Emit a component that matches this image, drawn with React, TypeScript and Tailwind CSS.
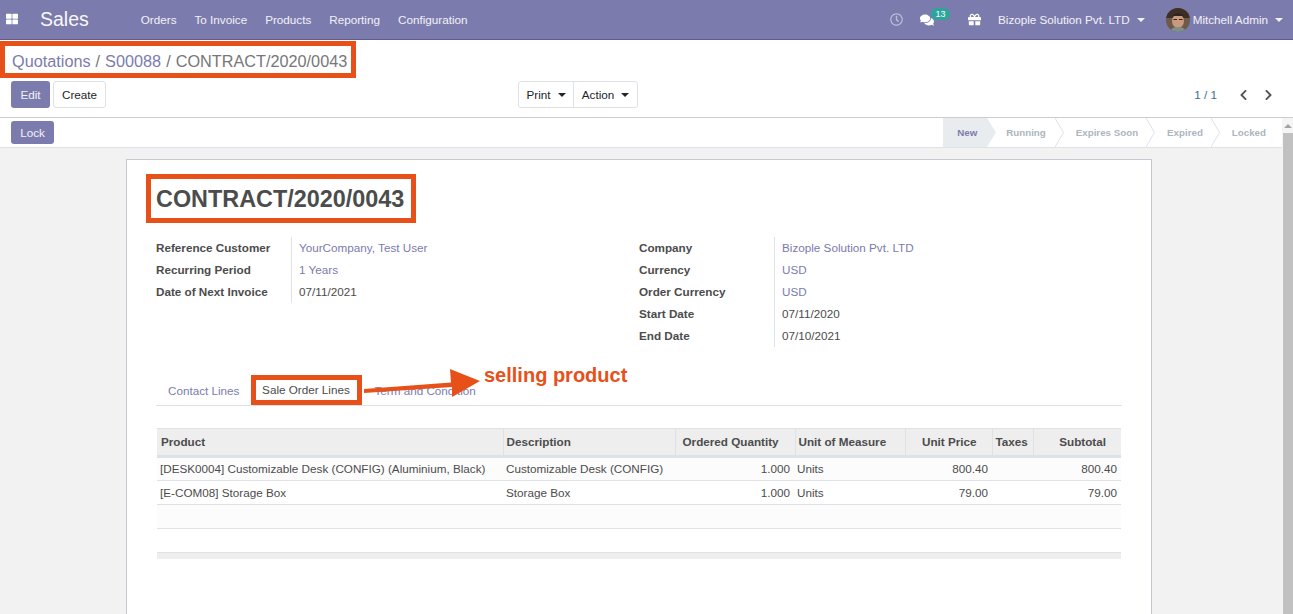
import React from "react";
import { FaThLarge, FaRegClock, FaComments, FaGift, FaChevronLeft, FaChevronRight } from "react-icons/fa";

const Caret = () => (
  <span className="inline-block w-0 h-0 border-x-[4px] border-x-transparent border-t-[4px] border-t-current align-middle" />
);

const Chevron = () => (
  <svg width="9" height="29" viewBox="0 0 9 29" className="shrink-0">
    <path d="M0 0 L8.5 14.5 L0 29" fill="none" stroke="#dee2e6" strokeWidth="1" />
  </svg>
);

const Field = ({ label, value, link }: { label: string; value: string; link?: boolean }) => (
  <div className="flex h-[22px] items-center">
    <div className="w-[135px] font-bold text-[#4c4c4c] pr-2 whitespace-nowrap">{label}</div>
    <div className={`pl-[7px] border-l border-[#dee2e6] h-full flex items-center whitespace-nowrap ${link ? "text-[#7c7bad]" : "text-[#4c4c4c]"}`}>{value}</div>
  </div>
);

const cols = [346, 172, 120, 110, 87, 41, 88];

const Row = ({ cells, shade }: { cells: string[]; shade?: boolean }) => (
  <tr className={`h-6 border-b border-[#dee2e6] ${shade ? "bg-[#fcfcfc]" : "bg-white"}`}>
    <td className="px-[3px] whitespace-nowrap">{cells[0]}</td>
    <td className="px-[3px] whitespace-nowrap">{cells[1]}</td>
    <td className="pl-[3px] pr-[5px] text-right">{cells[2]}</td>
    <td className="pl-[2px] pr-[3px]">{cells[3]}</td>
    <td className="pl-[3px] pr-[4px] text-right">{cells[4]}</td>
    <td className="px-[3px]"></td>
    <td className="pl-[3px] pr-[4px] text-right">{cells[5]}</td>
  </tr>
);

export default function App() {
  return (
    <div className="h-[614px] w-[1293px] overflow-hidden flex flex-col bg-white text-[11.7px] leading-[18px] text-[#4c4c4c] font-['Liberation_Sans',Arial,sans-serif]">
      {/* navbar */}
      <div className="h-10 shrink-0 bg-[#7c7bad] border-b border-[#5f5e8b] flex items-center text-white">
        <FaThLarge className="ml-[6px] mt-[-2px] w-3 h-3" />
        <div className="ml-[22px] text-[19.5px] opacity-95 mt-[-2px]">Sales</div>
        <div className="ml-[52px] flex gap-[18px] text-white/90">
          <span>Orders</span><span>To Invoice</span><span>Products</span><span>Reporting</span><span>Configuration</span>
        </div>
        <div className="ml-auto flex items-center">
          <FaRegClock className="w-[13px] h-[13px] text-white/50" />
          <div className="relative ml-[17px] w-[14px]">
            <FaComments className="w-[14px] h-[14px]" />
            <span className="absolute left-[11px] top-[-5px] h-3 w-[19px] rounded-full bg-[#2da59a] text-[9px] leading-3 text-center">13</span>
          </div>
          <FaGift className="ml-[34px] w-[13px] h-[13px]" />
          <span className="ml-[17px] text-white/90 whitespace-nowrap">Bizople Solution Pvt. LTD</span>
          <span className="ml-[7px] flex text-white/90"><Caret /></span>
          <svg width="24" height="24" viewBox="0 0 24 24" className="ml-[21px] rounded-full shrink-0">
            <rect width="24" height="24" fill="#6d5a48" />
            <path d="M0 0h24v10H0z" fill="#3d2e26" />
            <ellipse cx="12" cy="13" rx="6" ry="7" fill="#c99a7c" />
            <path d="M6 9c1-5 11-5 12 0l-2-1H8z" fill="#2e2420" />
            <path d="M7.5 11.5h3.5M13 11.5h3.5" stroke="#2e2420" strokeWidth="1.2" />
            <path d="M4 24c1-4 4-5 8-5s7 1 8 5z" fill="#7f8f8c" />
          </svg>
          <span className="ml-[3px] text-white/90 whitespace-nowrap">Mitchell Admin</span>
          <span className="ml-[7px] mr-[10px] flex text-white/90"><Caret /></span>
        </div>
      </div>

      {/* control panel */}
      <div className="h-[78px] shrink-0 border-b border-[#cccccc] flex flex-col">
        <div className="h-[41px] flex items-start">
          <div className="mt-[1px] h-[37px] w-[356px] pl-[7px] pt-[2px] border-[5px] border-[#e8501a] flex items-center text-[16.25px] whitespace-nowrap gap-[5px]">
            <span className="text-[#7c7bad]">Quotations</span><span className="text-[#777]">/</span>
            <span className="text-[#7c7bad]">S00088</span><span className="text-[#777]">/</span>
            <span className="text-[#777]">CONTRACT/2020/0043</span>
          </div>
        </div>
        <div className="flex items-center h-[27px] pl-[11px] pr-[19px] relative">
          <div className="h-[27px] w-[39px] rounded-[3px] bg-[#7c7bad] text-white/90 flex items-center justify-center">Edit</div>
          <div className="ml-[3px] h-[27px] w-[53px] rounded-[3px] bg-white border border-[#dee2e6] text-[#212529] flex items-center justify-center">Create</div>
          <div className="ml-[412px] h-[27px] w-[120px] flex rounded-[3px] border border-[#dee2e6] text-[#212529]">
            <div className="w-[55px] border-r border-[#dee2e6] flex items-center justify-center gap-[7px]">Print <Caret /></div>
            <div className="flex-1 flex items-center justify-center gap-[7px]">Action <Caret /></div>
          </div>
          <div className="ml-auto flex items-center text-[#4c4c4c]">
            <span className="text-[#3f6f87]">1 / 1</span>
            <FaChevronLeft className="ml-[21px] w-[11px] h-[12px] text-[#555]" />
            <FaChevronRight className="ml-[14px] w-[11px] h-[12px] text-[#555]" />
          </div>
        </div>
      </div>

      {/* scrolling body */}
      <div className="flex-1 min-h-0 flex">
        <div className="flex-1 min-w-0 flex flex-col">
          {/* status bar */}
          <div className="h-[30px] shrink-0 border-b border-[#dee2e6] flex items-center bg-white">
            <div className="ml-[11px] h-[23px] w-[43px] rounded-[3px] bg-[#7c7bad] text-white/90 flex items-center justify-center">Lock</div>
            <div className="ml-auto h-[29px] flex items-center text-[9.75px] font-bold text-[#adb5bd] whitespace-nowrap">
              <div className="h-full flex items-center bg-[#e9ecef] text-[#7c7bad] pl-[14px] pr-[10px]">New</div>
              <svg width="9" height="29" viewBox="0 0 9 29" className="shrink-0"><path d="M0 0 L9 14.5 L0 29z" fill="#e9ecef" /></svg>
              <span className="ml-[10px] mr-[9px]">Running</span><Chevron />
              <span className="ml-[12px] mr-[8px]">Expires Soon</span><Chevron />
              <span className="ml-[12px] mr-[8px]">Expired</span><Chevron />
              <span className="ml-[12px] mr-[16px]">Locked</span>
            </div>
          </div>
          {/* form background */}
          <div className="flex-1 min-h-0 bg-[#f2f2f2] pt-[11px] pl-[126px] overflow-hidden">
            <div className="w-[1026px] h-[600px] bg-white border border-[#c8c8d0] pl-[29px] pr-[29px] pt-[14px] relative">
              <div className="inline-block h-[49px] ml-[-10px] pl-[5px] pr-[7px] border-[5px] border-[#e8501a] text-[23.4px] leading-[41px] font-bold text-[#4c4c4c] whitespace-nowrap">CONTRACT/2020/0043</div>
              <div className="mt-[14px] flex">
                <div className="w-[483px] h-[110px]">
                  <Field label="Reference Customer" value="YourCompany, Test User" link />
                  <Field label="Recurring Period" value="1 Years" link />
                  <Field label="Date of Next Invoice" value="07/11/2021" />
                </div>
                <div>
                  <Field label="Company" value="Bizople Solution Pvt. LTD" link />
                  <Field label="Currency" value="USD" link />
                  <Field label="Order Currency" value="USD" link />
                  <Field label="Start Date" value="07/11/2020" />
                  <Field label="End Date" value="07/10/2021" />
                </div>
              </div>

              {/* tabs */}
              <div className="mt-[29px] h-[30px] border-b border-[#dee2e6] flex items-end w-[966px]">
                <span className="ml-[12px] mb-[5px] text-[#7c7bad]">Contact Lines</span>
                <div className="ml-[12px] h-[30px] w-[111px] border-[5px] border-[#e8501a] pr-[2px] flex items-center justify-center text-[#4c4c4c] whitespace-nowrap">Sale Order Lines</div>
                <span className="ml-[12px] mb-[5px] text-[#7c7bad]">Term and Condition</span>
              </div>

              {/* annotation */}
              <svg width="125" height="34" viewBox="0 0 125 34" className="absolute left-[236px] top-[208px]">
                <path d="M1 21 L88 14.5 L87 1 L117 13 L89 29 L89 19 L1 25z" fill="#e8501a" />
              </svg>
              <div className="absolute left-[357px] top-[203px] text-[20px] leading-6 font-bold text-[#e8501a] whitespace-nowrap">selling product</div>

              {/* table */}
              <table className="mt-[22px] ml-[1px] table-fixed border-collapse w-[964px] text-[#4c4c4c]">
                <colgroup>
                  {cols.map((w, i) => <col key={i} style={{ width: w }} />)}
                </colgroup>
                <thead>
                  <tr className="h-[28px] bg-[#eeeeee] border-t border-[#dee2e6] border-b-[3px] font-bold">
                    <th className="px-1 text-left border-r border-[#dee2e6]">Product</th>
                    <th className="px-[3px] text-left border-r border-[#dee2e6]">Description</th>
                    <th className="px-[7px] text-left border-r border-[#dee2e6] whitespace-nowrap">Ordered Quantity</th>
                    <th className="px-[3px] text-left border-r border-[#dee2e6] whitespace-nowrap">Unit of Measure</th>
                    <th className="pr-[15px] text-right border-r border-[#dee2e6] whitespace-nowrap">Unit Price</th>
                    <th className="px-[3px] text-left border-r border-[#dee2e6]">Taxes</th>
                    <th className="pr-[15px] text-right">Subtotal</th>
                  </tr>
                </thead>
                <tbody>
                  <Row shade cells={["[DESK0004] Customizable Desk (CONFIG) (Aluminium, Black)", "Customizable Desk (CONFIG)", "1.000", "Units", "800.40", "800.40"]} />
                  <Row cells={["[E-COM08] Storage Box", "Storage Box", "1.000", "Units", "79.00", "79.00"]} />
                  <Row shade cells={["", "", "", "", "", ""]} />
                  <Row cells={["", "", "", "", "", ""]} />
                  <tr className="h-[6px] bg-[#eeeeee]"><td colSpan={7}></td></tr>
                </tbody>
              </table>
            </div>
          </div>
        </div>
        {/* scrollbar */}
        <div className="w-[11px] shrink-0 bg-[#f5f5f5] flex flex-col items-center pl-[1px]">
          <span className="mt-[6px] w-0 h-0 border-x-[4px] border-x-transparent border-b-[4px] border-b-[#a3a3a3]" />
          <div className="mt-[5px] flex-1 w-[10px] bg-[#c1c1c1]" />
        </div>
      </div>
    </div>
  );
}
